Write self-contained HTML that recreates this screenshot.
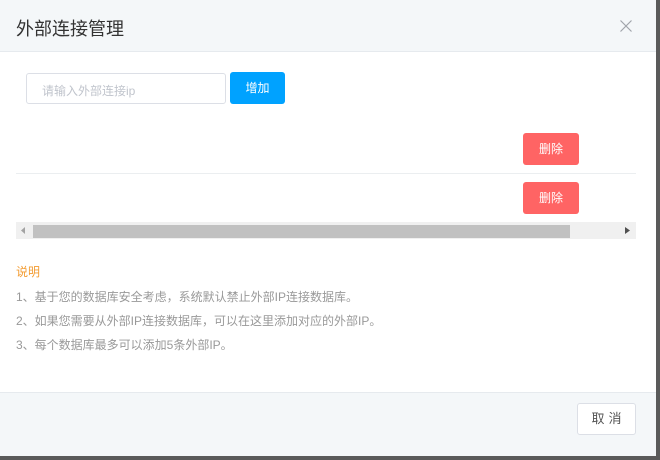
<!DOCTYPE html>
<html><head><meta charset="utf-8"><style>
body{margin:0;width:660px;height:460px;background:#5a5a5a;position:relative;overflow:hidden;font-family:"Liberation Sans","Noto Sans CJK SC",sans-serif}
.dlg{position:absolute;left:0;top:0;width:656px;height:455px;background:#fff}
.hd{position:absolute;left:0;top:0;width:656px;height:51px;background:#f4f7f9;border-bottom:1px solid #e6eaee}
.hd .t{position:absolute;left:16px;top:17px;font-size:18px;color:#333;line-height:24px}
.x{position:absolute;left:620px;top:20px}
.inp{position:absolute;left:26px;top:73px;border:1px solid #dcdfe6;border-radius:3px;box-sizing:border-box;width:200px;height:31px}
.inp span{position:absolute;left:15px;top:8px;font-size:12px;color:#c0c4cc}
.add{position:absolute;left:230px;top:72px;width:55px;height:32px;background:#00a2ff;border-radius:3px;color:#fff;font-size:12px;text-align:center;line-height:32px}
.del{position:absolute;left:523px;width:56px;height:32px;background:#ff6464;border-radius:3px;color:#fff;font-size:12px;text-align:center;line-height:32px}
.sep{position:absolute;left:16px;top:173px;width:620px;height:1px;background:#ebeef0}
.sb{position:absolute;left:16px;top:222px;width:620px;height:17px;background:#f0f0f0}
.th{position:absolute;left:17px;top:3px;width:537px;height:13px;background:#c1c1c1}
.n{position:absolute;left:16px;font-size:12px;color:#999;line-height:16px}
.ft{position:absolute;left:0;top:392px;width:656px;height:63px;background:#f4f7f9;border-top:1px solid #e6eaee}
.cc{position:absolute;left:577px;top:403px;width:59px;height:32px;box-sizing:border-box;border:1px solid #dcdfe6;border-radius:3px;background:#fff;font-size:13px;color:#555;text-align:center;line-height:30px;letter-spacing:4px;text-indent:4px}
</style></head><body>
<div class="dlg">
<div class="hd"><div class="t">外部连接管理</div>
<svg class="x" width="12" height="12" viewBox="0 0 12 12"><path d="M0.5 0.5L11.5 11.5M11.5 0.5L0.5 11.5" stroke="#a0a4aa" stroke-width="1.2"/></svg></div>
<div class="inp"><span>请输入外部连接ip</span></div>
<div class="add">增加</div>
<div class="del" style="top:133px">删除</div>
<div class="sep"></div>
<div class="del" style="top:182px">删除</div>
<div class="sb"><div class="th"></div>
<svg style="position:absolute;left:5px;top:5px" width="5" height="7"><path d="M4 0L0 3.5L4 7Z" fill="#a3a3a3"/></svg>
<svg style="position:absolute;left:609px;top:5px" width="5" height="7"><path d="M0 0L5 3.5L0 7Z" fill="#505050"/></svg></div>
<div class="n" style="top:264px;color:#f39c32">说明</div>
<div class="n" style="top:289px">1、基于您的数据库安全考虑，系统默认禁止外部IP连接数据库。</div>
<div class="n" style="top:313px">2、如果您需要从外部IP连接数据库，可以在这里添加对应的外部IP。</div>
<div class="n" style="top:337px">3、每个数据库最多可以添加5条外部IP。</div>
<div class="ft"></div>
<div class="cc">取消</div>
</div>
</body></html>
